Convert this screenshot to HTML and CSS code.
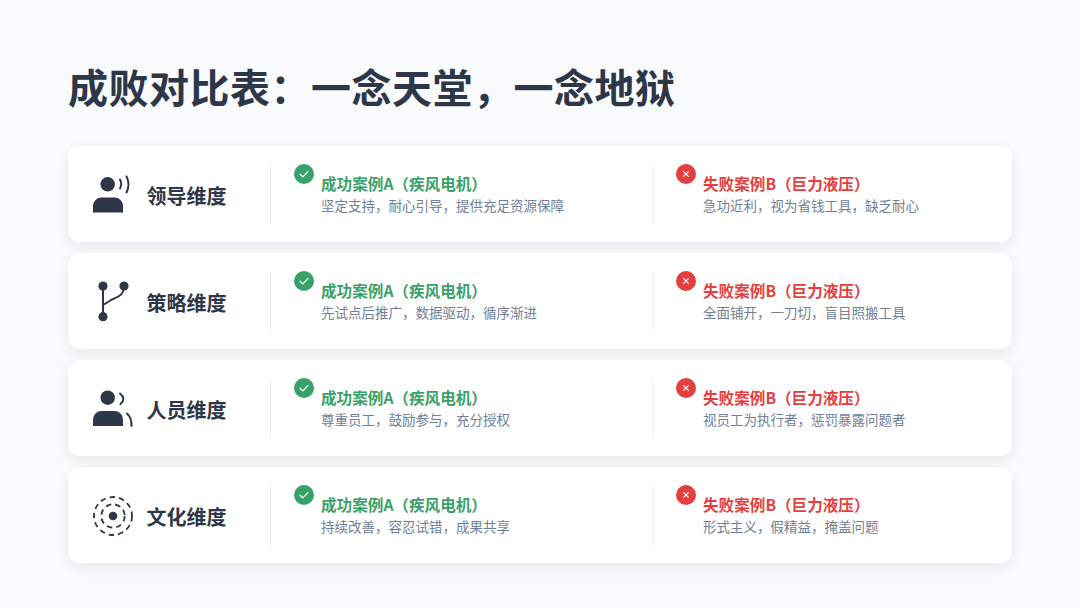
FILE: index.html
```html
<!DOCTYPE html>
<html lang="zh-CN">
<head>
<meta charset="utf-8">
<title>成败对比表</title>
<link rel="stylesheet" href="styles.css">
</head>
<body>
<main class="page">
<h1 class="title">成败对比表&#xFF1A;一念天堂&#xFF0C;一念地狱</h1>
<div class="rows">
<section class="row">
<div class="dim">
<svg class="dim-icon" viewBox="0 0 40 40"><circle class="fill" cx="14.7" cy="9.3" r="7.2"/><path class="fill" d="M0 37.5V31a8.5 8.5 0 0 1 8.5-8.5h13A8.5 8.5 0 0 1 30 31v6.5z"/><path class="line" d="M27 4.5Q29.5 9 27 13.5"/><path class="line" d="M33.5 1.5Q37.5 9.5 33.5 17.5"/></svg>
<span class="dim-label">领导维度</span>
</div>
<div class="case">
<svg class="badge" viewBox="0 0 20 20"><circle class="ok" cx="10" cy="10" r="10"/><path class="mark" d="M6 10.2l2.8 2.6L14 7.6"/></svg>
<div class="case-text"><div class="case-title good">成功案例A&#xFF08;疾风电机&#xFF09;</div><div class="case-desc">坚定支持&#xFF0C;耐心引导&#xFF0C;提供充足资源保障</div></div>
</div>
<div class="case">
<svg class="badge" viewBox="0 0 20 20"><circle class="bad-c" cx="10" cy="10" r="10"/><path class="mark" d="M7.6 7.6l4.8 4.8M12.4 7.6l-4.8 4.8"/></svg>
<div class="case-text"><div class="case-title bad">失败案例B&#xFF08;巨力液压&#xFF09;</div><div class="case-desc">急功近利&#xFF0C;视为省钱工具&#xFF0C;缺乏耐心</div></div>
</div>
</section>
<section class="row">
<div class="dim">
<svg class="dim-icon" viewBox="0 0 40 40"><path class="line" d="M10 4V35"/><path class="line" d="M31 4C31 14 24 15 18 18L10 23"/><circle class="fill" cx="10" cy="4" r="4.6"/><circle class="fill" cx="31" cy="4" r="4.6"/><circle class="fill" cx="10" cy="34.7" r="4.6"/></svg>
<span class="dim-label">策略维度</span>
</div>
<div class="case">
<svg class="badge" viewBox="0 0 20 20"><circle class="ok" cx="10" cy="10" r="10"/><path class="mark" d="M6 10.2l2.8 2.6L14 7.6"/></svg>
<div class="case-text"><div class="case-title good">成功案例A&#xFF08;疾风电机&#xFF09;</div><div class="case-desc">先试点后推广&#xFF0C;数据驱动&#xFF0C;循序渐进</div></div>
</div>
<div class="case">
<svg class="badge" viewBox="0 0 20 20"><circle class="bad-c" cx="10" cy="10" r="10"/><path class="mark" d="M7.6 7.6l4.8 4.8M12.4 7.6l-4.8 4.8"/></svg>
<div class="case-text"><div class="case-title bad">失败案例B&#xFF08;巨力液压&#xFF09;</div><div class="case-desc">全面铺开&#xFF0C;一刀切&#xFF0C;盲目照搬工具</div></div>
</div>
</section>
<section class="row">
<div class="dim">
<svg class="dim-icon" viewBox="0 0 40 40"><circle class="fill" cx="14.7" cy="8.7" r="7.2"/><path class="fill" d="M0 37V30.5A8.5 8.5 0 0 1 8.5 22h13a8.5 8.5 0 0 1 8.5 8.5V37z"/><path class="line" d="M27 4.5Q33.5 9.5 27.5 15"/><path class="line" d="M34 24.5Q39 29 38.5 37"/></svg>
<span class="dim-label">人员维度</span>
</div>
<div class="case">
<svg class="badge" viewBox="0 0 20 20"><circle class="ok" cx="10" cy="10" r="10"/><path class="mark" d="M6 10.2l2.8 2.6L14 7.6"/></svg>
<div class="case-text"><div class="case-title good">成功案例A&#xFF08;疾风电机&#xFF09;</div><div class="case-desc">尊重员工&#xFF0C;鼓励参与&#xFF0C;充分授权</div></div>
</div>
<div class="case">
<svg class="badge" viewBox="0 0 20 20"><circle class="bad-c" cx="10" cy="10" r="10"/><path class="mark" d="M7.6 7.6l4.8 4.8M12.4 7.6l-4.8 4.8"/></svg>
<div class="case-text"><div class="case-title bad">失败案例B&#xFF08;巨力液压&#xFF09;</div><div class="case-desc">视员工为执行者&#xFF0C;惩罚暴露问题者</div></div>
</div>
</section>
<section class="row">
<div class="dim">
<svg class="dim-icon" viewBox="0 0 40 40"><circle class="dash" cx="20" cy="20" r="19"/><circle class="dash" cx="20" cy="20" r="11.7"/><circle class="fill" cx="20" cy="20" r="4.3"/></svg>
<span class="dim-label">文化维度</span>
</div>
<div class="case">
<svg class="badge" viewBox="0 0 20 20"><circle class="ok" cx="10" cy="10" r="10"/><path class="mark" d="M6 10.2l2.8 2.6L14 7.6"/></svg>
<div class="case-text"><div class="case-title good">成功案例A&#xFF08;疾风电机&#xFF09;</div><div class="case-desc">持续改善&#xFF0C;容忍试错&#xFF0C;成果共享</div></div>
</div>
<div class="case">
<svg class="badge" viewBox="0 0 20 20"><circle class="bad-c" cx="10" cy="10" r="10"/><path class="mark" d="M7.6 7.6l4.8 4.8M12.4 7.6l-4.8 4.8"/></svg>
<div class="case-text"><div class="case-title bad">失败案例B&#xFF08;巨力液压&#xFF09;</div><div class="case-desc">形式主义&#xFF0C;假精益&#xFF0C;掩盖问题</div></div>
</div>
</section>
</div>
</main>
</body>
</html>
```
FILE: styles.css
```css
* { box-sizing: border-box; }
html, body { margin: 0; padding: 0; }
body {
  width: 1080px;
  height: 608px;
  overflow: hidden;
  background: #f8fafc;
  font-family: "Noto Sans CJK SC", "Noto Sans", sans-serif;
  color: #2d3748;
}
.page { padding: 57px 68px 0; }
.title {
  margin: 0 0 31px;
  font-size: 40px;
  line-height: 58px;
  font-weight: 700;
  letter-spacing: 0.5px;
  color: #2d3748;
}
.rows { display: flex; flex-direction: column; gap: 11px; }
.row {
  display: grid;
  grid-template-columns: 202px 382px 1fr;
  height: 96px;
  padding: 19px 0 17px;
  background: #fff;
  border-radius: 12px;
  box-shadow: 0 4px 14px rgba(0, 0, 0, 0.07);
}
.dim { display: flex; align-items: center; gap: 13.5px; padding-left: 25px; }
.dim-icon { width: 40px; height: 40px; overflow: visible; flex: none; margin-top: -1px; }
.fill { fill: #2d3748; }
.line { fill: none; stroke: #2d3748; stroke-width: 2; stroke-linecap: round; }
.dash { fill: none; stroke: #2d3748; stroke-width: 1.8; stroke-dasharray: 5.5 4; }
.dim-label { font-size: 20px; line-height: 28px; font-weight: 700; color: #2d3748; position: relative; top: 1px; }
.case { display: flex; align-items: flex-start; gap: 7px; padding-left: 23px; border-left: 1px solid #edf2f7; }
.badge { width: 20px; height: 20px; flex: none; margin-top: -1px; }
.ok { fill: #38a169; }
.bad-c { fill: #e53e3e; }
.mark { fill: none; stroke: #fff; stroke-width: 1.2; stroke-linecap: round; stroke-linejoin: round; }
.case-text { padding-top: 8px; }
.case-title { font-size: 15.6px; line-height: 20px; font-weight: 700; }
.good { color: #38a169; }
.bad { color: #e53e3e; }
.case-desc { font-size: 13.5px; line-height: 20px; margin-top: 2px; color: #718096; }
```
